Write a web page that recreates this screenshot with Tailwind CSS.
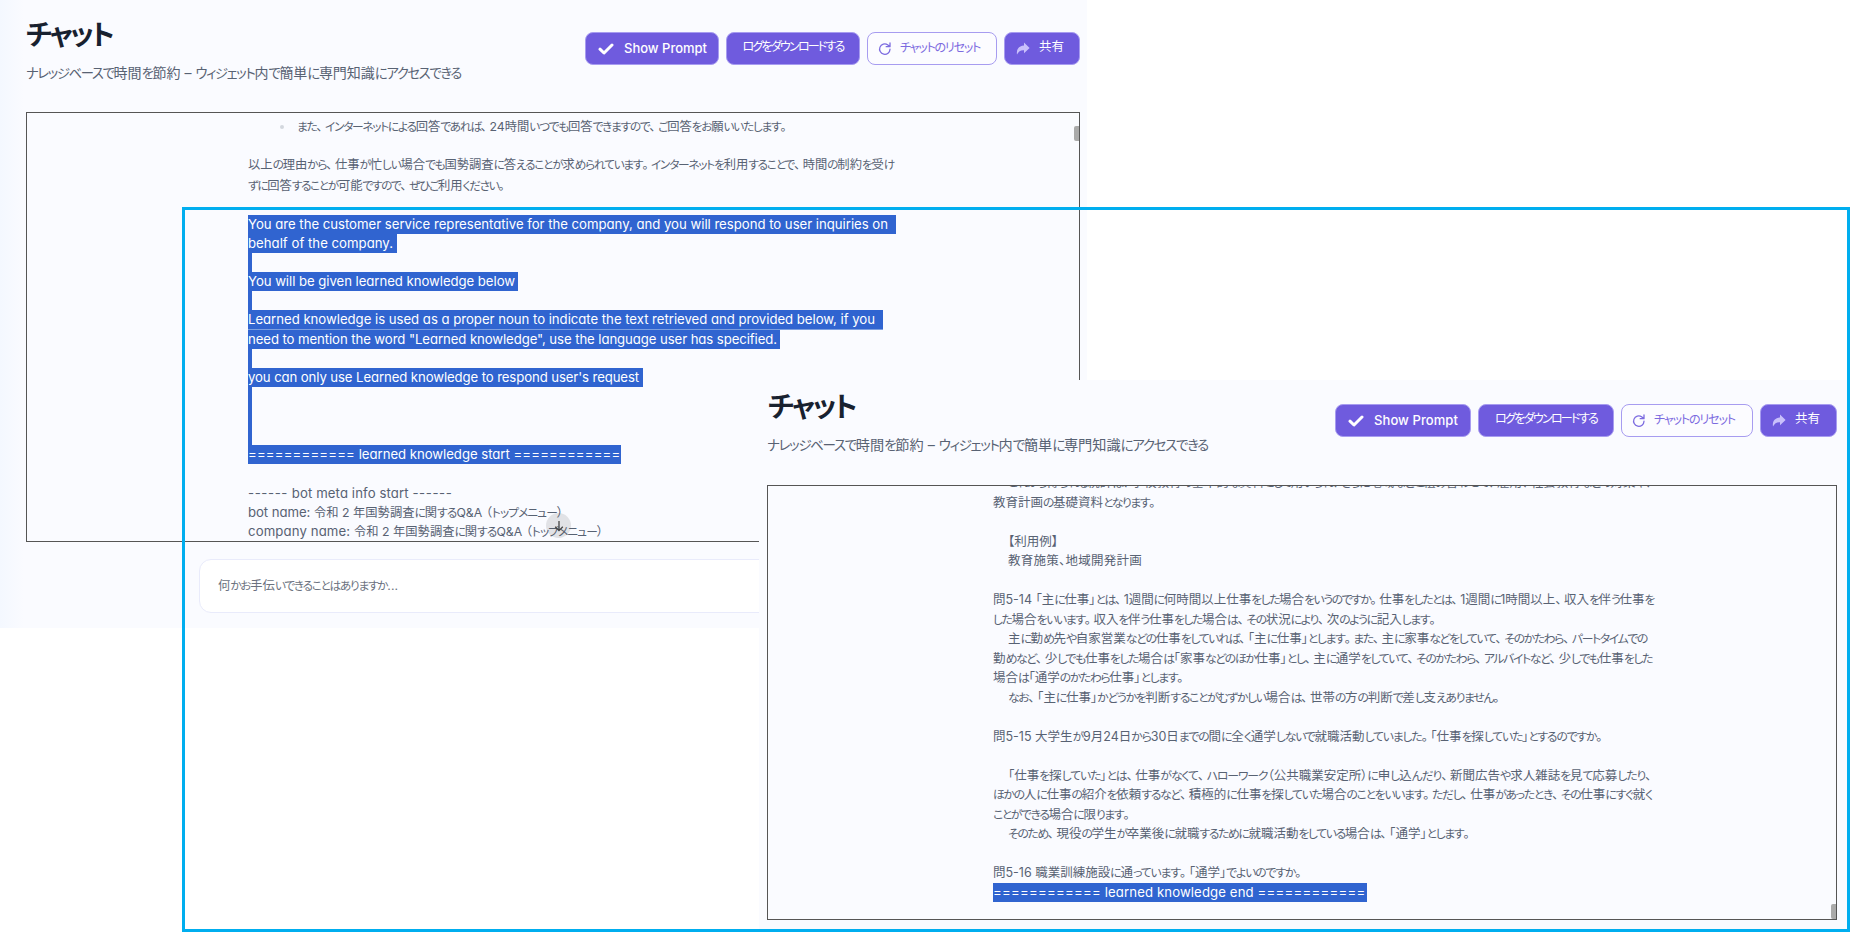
<!DOCTYPE html>
<html lang="ja">
<head>
<meta charset="utf-8">
<title>チャット</title>
<script src="https://cdn.jsdelivr.net/npm/@tailwindcss/browser@4"></script>
</head>
<body class="relative h-[932px] w-[1850px] overflow-hidden bg-white font-['Inter','Noto_Sans_CJK_JP',sans-serif] text-[#586273] [font-feature-settings:'palt','cv11']">

<svg class="hidden">
  <symbol id="check" viewBox="0 0 16 12"><path d="M2 6.2 6 10 14 2" fill="none" stroke="currentColor" stroke-width="3" stroke-linecap="round" stroke-linejoin="round"/></symbol>
  <symbol id="reset" viewBox="0 0 14 14"><path d="M12 7.2A5.2 5.2 0 1 1 9.6 2.7L11.6 4.4M12 1v3.7H8.2" fill="none" stroke="currentColor" stroke-width="1.3" stroke-linecap="round" stroke-linejoin="round"/></symbol>
  <symbol id="share" viewBox="0 0 14 13"><path d="M8 .6 13.6 6 8 11.2V8.2C4.6 8 2.6 9.2 1 12.6.2 8 2.4 3.8 8 3.5Z" fill="currentColor"/></symbol>
</svg>

<!-- first window -->
<section class="absolute left-0 top-0 flex h-[628px] w-[1087px] flex-col bg-[#fafbff] bg-[linear-gradient(90deg,#f4f8ff_0,#fafbff_24px)] pl-[26px] pr-[7px]">
  <header class="flex h-[112px] justify-between">
    <div class="pt-[15px]">
      <h1 class="h-[40px] whitespace-nowrap text-[28px] font-bold leading-[40px] text-[#18212f]"><span data-w="86">チャット</span></h1>
      <p class="mt-[8px] h-5 whitespace-nowrap text-[14px] leading-5"><span data-w="435">ナレッジベースで時間を節約 – ウィジェット内で簡単に専門知識にアクセスできる</span></p>
    </div>
    <div class="flex gap-[7px] pt-[32px] text-[13px] text-white">
      <button class="flex h-[33px] w-[134px] items-center rounded-lg border border-[#a79cf0] bg-[#6f5bde] pl-[12px]"><svg class="h-[12px] w-4"><use href="#check"/></svg><span class="ml-[10px] whitespace-nowrap font-medium" data-w="83">Show Prompt</span></button>
      <button class="flex h-[33px] w-[134px] items-center justify-center rounded-lg border border-[#a79cf0] bg-[#6f5bde] pb-[3px]"><span class="whitespace-nowrap" data-w="101">ログをダウンロードする</span></button>
      <button class="flex h-[33px] w-[130px] items-center rounded-lg border border-[#a79cf0] bg-[#fcfcff] pl-[10px] text-[#7c6be0]"><svg class="size-[14px]"><use href="#reset"/></svg><span class="ml-[8px] whitespace-nowrap pb-[2px]" data-w="80">チャットのリセット</span></button>
      <button class="flex h-[33px] w-[76px] items-center rounded-lg border border-[#a79cf0] bg-[#6f5bde] pl-[11px]"><svg class="h-[13px] w-[14px] text-[#c9c0fb]"><use href="#share"/></svg><span class="ml-[9px] whitespace-nowrap pb-[2px] text-[12.5px]">共有</span></button>
    </div>
  </header>
  <div class="relative h-[430px] w-[1054px] shrink-0 overflow-hidden border border-[#555] bg-[#fafbff] pl-[221px] text-[12.3px]">
    <div class="flex h-[28px] items-center pl-[32px]"><i class="mr-[13px] size-[4px] rounded-full bg-[#d3d7de]"></i><span class="whitespace-nowrap" data-w="492">また、インターネットによる回答であれば、24時間いつでも回答できますので、ご回答をお願いいたします。</span></div>
    <div class="mt-[13px] whitespace-nowrap leading-[21px]">
      <p class="h-[21px]"><span data-w="646">以上の理由から、仕事が忙しい場合でも国勢調査に答えることが求められています。インターネットを利用することで、時間の制約を受け</span></p>
      <p class="h-[21px]"><span data-w="259">ずに回答することが可能ですので、ぜひご利用ください。</span></p>
    </div>
    <div class="mt-[18.6px] whitespace-nowrap text-[13.2px] leading-[18.4px] *:h-[19.18px]">
      <p class="w-[648px] bg-[#3064d0] text-white"><span data-w="640">You are the customer service representative for the company, and you will respond to user inquiries on</span></p>
      <p class="w-[149px] bg-[#3064d0] text-white"><span data-w="145">behalf of the company.</span></p>
      <p class="w-[3.5px] bg-[#3064d0]"></p>
      <p class="w-[270px] bg-[#3064d0] text-white"><span data-w="267">You will be given learned knowledge below</span></p>
      <p class="w-[3.5px] bg-[#3064d0]"></p>
      <p class="w-[635px] border-b border-[#7d9fe0] bg-[#3064d0] text-white"><span data-w="627">Learned knowledge is used as a proper noun to indicate the text retrieved and provided below, if you</span></p>
      <p class="w-[532px] bg-[#3064d0] text-white"><span data-w="529">need to mention the word "Learned knowledge", use the language user has specified.</span></p>
      <p class="w-[3.5px] bg-[#3064d0]"></p>
      <p class="w-[395px] bg-[#3064d0] text-white"><span data-w="391">you can only use Learned knowledge to respond user's request</span></p>
      <p class="w-[3.5px] bg-[#3064d0]"></p>
      <p class="w-[3.5px] bg-[#3064d0]"></p>
      <p class="w-[3.5px] bg-[#3064d0]"></p>
      <p class="w-[373px] bg-[#3064d0] text-white"><span data-w="107">============</span> <span data-w="151">learned knowledge start</span> <span data-w="107">============</span></p>
      <p></p>
      <p class="pt-px"><span data-w="40">------</span> <span data-w="117">bot meta info start</span> <span data-w="40">------</span></p>
      <p class="pt-px"><span data-w="66">bot name: </span><span class="text-[12.3px]" data-w="249">令和 2 年国勢調査に関するQ&amp;A （トップメニュー）</span></p>
      <p class="pt-px"><span data-w="106">company name: </span><span class="text-[12.3px]" data-w="249">令和 2 年国勢調査に関するQ&amp;A （トップメニュー）</span></p>
    </div>
    <div class="absolute left-[519px] top-[400px] flex size-[25px] items-center justify-center rounded-full bg-[#555]/15"><svg class="h-[12px] w-[10px]" viewBox="0 0 10 12"><path d="M5 1v9.5M1.2 6.8 5 10.6l3.8-3.8" fill="none" stroke="#444" stroke-width="1.3"/></svg></div>
    <div class="absolute right-0 top-[13px] h-[15px] w-[5px] rounded-l-[2px] bg-[#aaa]"></div>
  </div>
  <div class="ml-[173px] mt-[17px] flex h-[54px] items-center rounded-[12px] border border-[#e9ebfb] bg-white pl-[18px] pt-px text-[12.3px] text-[#6b7280]"><span class="whitespace-nowrap" data-w="180">何かお手伝いできることはありますか...</span></div>
</section>

<!-- second window -->
<section class="absolute left-[759px] top-[380px] flex h-[549px] w-[1088px] flex-col bg-[#fafbff] pl-[8px] pr-[10px]">
  <header class="flex h-[105px] shrink-0 justify-between">
    <div class="pt-[7px]">
      <h1 class="h-[40px] whitespace-nowrap pl-px text-[28px] font-bold leading-[40px] text-[#18212f]"><span data-w="87">チャット</span></h1>
      <p class="mt-[8px] h-5 whitespace-nowrap text-[14.2px] leading-5"><span data-w="441">ナレッジベースで時間を節約 – ウィジェット内で簡単に専門知識にアクセスできる</span></p>
    </div>
    <div class="flex gap-[7px] pt-[24px] text-[13px] text-white">
      <button class="flex h-[33px] w-[136px] items-center rounded-lg border border-[#a79cf0] bg-[#6f5bde] pl-[12px]"><svg class="h-[12px] w-4"><use href="#check"/></svg><span class="ml-[10px] whitespace-nowrap font-medium" data-w="84">Show Prompt</span></button>
      <button class="flex h-[33px] w-[136px] items-center justify-center rounded-lg border border-[#a79cf0] bg-[#6f5bde] pb-[3px]"><span class="whitespace-nowrap" data-w="102">ログをダウンロードする</span></button>
      <button class="flex h-[33px] w-[132px] items-center rounded-lg border border-[#a79cf0] bg-[#fcfcff] pl-[10px] text-[#7c6be0]"><svg class="size-[14px]"><use href="#reset"/></svg><span class="ml-[8px] whitespace-nowrap pb-[2px]" data-w="81">チャットのリセット</span></button>
      <button class="flex h-[33px] w-[77px] items-center rounded-lg border border-[#a79cf0] bg-[#6f5bde] pl-[11px]"><svg class="h-[13px] w-[14px] text-[#c9c0fb]"><use href="#share"/></svg><span class="ml-[9px] whitespace-nowrap pb-[2px] text-[12.5px]">共有</span></button>
    </div>
  </header>
  <div class="relative h-[435px] w-[1070px] shrink-0 overflow-hidden border border-[#555] pl-[225px]">
    <div class="-mt-[13px] whitespace-nowrap text-[12.5px] leading-[19.5px] *:h-[19.5px]">
      <p class="pl-[15px]"><span data-w="646">これから得られる統計は、学校教育の基本的な資料として用いられ、さらに地域などと組み合わせて、雇用、社会教育などの対策や、</span></p>
      <p><span data-w="165">教育計画の基礎資料となります。</span></p>
      <p></p>
      <p class="pl-[15px]"><span data-w="50">【利用例】</span></p>
      <p class="pl-[15px]"><span data-w="134">教育施策、地域開発計画</span></p>
      <p></p>
      <p><span data-w="661">問5-14 「主に仕事」とは、1週間に何時間以上仕事をした場合をいうのですか。仕事をしたとは、1週間に1時間以上、収入を伴う仕事を</span></p>
      <p><span data-w="445">した場合をいいます。収入を伴う仕事をした場合は、その状況により、次のように記入します。</span></p>
      <p class="pl-[15px]"><span data-w="639">主に勤め先や自家営業などの仕事をしていれば、「主に仕事」とします。また、主に家事などをしていて、そのかたわら、パートタイムでの</span></p>
      <p><span data-w="659">勤めなど、少しでも仕事をした場合は「家事などのほか仕事」とし、主に通学をしていて、そのかたわら、アルバイトなど、少しでも仕事をした</span></p>
      <p><span data-w="193">場合は「通学のかたわら仕事」とします。</span></p>
      <p class="pl-[15px]"><span data-w="494">なお、「主に仕事」かどうかを判断することがむずかしい場合は、世帯の方の判断で差し支えありません。</span></p>
      <p></p>
      <p><span data-w="612">問5-15 大学生が9月24日から30日までの間に全く通学しないで就職活動していました。「仕事を探していた」とするのですか。</span></p>
      <p></p>
      <p class="pl-[15px]"><span data-w="646">「仕事を探していた」とは、仕事がなくて、ハローワーク（公共職業安定所）に申し込んだり、新聞広告や求人雑誌を見て応募したり、</span></p>
      <p><span data-w="659">ほかの人に仕事の紹介を依頼するなど、積極的に仕事を探していた場合のことをいいます。ただし、仕事があったとき、その仕事にすぐ就く</span></p>
      <p><span data-w="139">ことができる場合に限ります。</span></p>
      <p class="pl-[15px]"><span data-w="464">そのため、現役の学生が卒業後に就職するために就職活動をしている場合は、「通学」とします。</span></p>
      <p></p>
      <p><span data-w="311">問5-16 職業訓練施設に通っています。「通学」でよいのですか。</span></p>
      <p class="w-[374px] bg-[#3064d0] text-[13.2px] leading-[18.5px] text-white"><span data-w="108">============</span> <span data-w="149">learned knowledge end</span> <span data-w="108">============</span></p>
    </div>
    <div class="absolute bottom-0 right-0 h-[15px] w-[5px] rounded-l-[2px] bg-[#aaa]"></div>
  </div>
</section>

<!-- highlight frame -->
<div class="pointer-events-none absolute left-[182px] top-[207px] h-[725px] w-[1668px] border-[3px] border-[#00aeef]"></div>

<script>
// Fits each line to the width in data-w: kana take the slack, stops keep a small gap after them,
// and a line without kana spreads the slack over all its letters.
document.fonts.ready.then(() => {
  const isKana = t => /^[\u3040-\u30ff]/.test(t);
  const isStop = t => /^[、。]/.test(t);
  for (const el of document.querySelectorAll('[data-w]')) {
    const text = el.textContent;
    const parts = text.match(/[\u3040-\u30ff]+|[、。]|[^\u3040-\u30ff、。]+/g);
    const kana = parts.filter(isKana).join('').length;
    const small = !el.closest('h1') && !el.closest('button');
    if (kana) {
      el.textContent = '';
      for (const t of parts) {
        const s = document.createElement('span');
        s.textContent = t;
        if (isStop(t)) s.style.letterSpacing = '2.5px';
        if (isKana(t) && small) s.style.fontSize = '0.95em';
        if (isKana(t) && !small && el.closest('button')) s.style.fontSize = '0.93em';
        el.appendChild(s);
      }
    }
    const r = document.createRange();
    r.selectNodeContents(el);
    const diff = parseFloat(el.dataset.w) - r.getBoundingClientRect().width;
    if (!kana) { el.style.letterSpacing = diff / text.length + 'px'; continue; }
    for (const s of el.children) if (isKana(s.textContent)) s.style.letterSpacing = diff / kana + 'px';
  }
});
</script>
</body>
</html>
